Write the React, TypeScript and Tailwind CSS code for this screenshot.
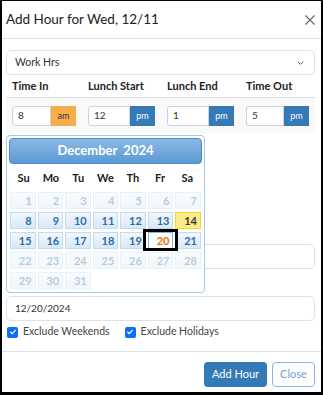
import React from 'react'

const times = [
  { label: 'Time In', value: '8', suffix: 'am' },
  { label: 'Lunch Start', value: '12', suffix: 'pm' },
  { label: 'Lunch End', value: '1', suffix: 'pm' },
  { label: 'Time Out', value: '5', suffix: 'pm' },
]

const weekDays = ['Su', 'Mo', 'Tu', 'We', 'Th', 'Fr', 'Sa']
const days = Array.from({ length: 31 }, (_, i) => i + 1)

function DayCell({ day }: { day: number }) {
  const disabled = day < 8 || day > 21
  const today = day === 14
  const selected = day === 20

  let cls = 'border-[#c5dbec] bg-linear-to-b from-[#f1f7fd] to-[#d8e8f8] text-[#2e6e9e]'
  if (today) cls = 'border-[#fad42e] bg-[#fbec88] text-[#363636]'
  if (selected) cls = 'border-[#79b7e7] bg-white text-[#e17009]'

  return (
    <div
      className={`relative h-[17px] border text-right pr-[3px] text-[11px] font-bold leading-[15px] ${cls} ${disabled ? 'opacity-35' : ''}`}
    >
      {day}
      {selected && (
        <span className="absolute -left-[6px] -right-[6px] -top-[4px] -bottom-[3px] z-10 border-[3px] border-black" />
      )}
    </div>
  )
}

function DatePicker() {
  return (
    <div className="absolute left-[4px] top-[134px] w-[199px] rounded-[4px] border border-[#a6c9e2] bg-white p-[2px] pb-[3px]">
      <div className="flex h-[26px] items-center justify-center rounded-[4px] border border-[#4f8ac2] bg-linear-to-b from-[#8cb9e4] to-[#5a9ad4] text-[13px] font-bold text-white">
        December&nbsp;&nbsp;2024
      </div>
      <div className="grid h-[28px] grid-cols-7 items-center px-[1px] text-center text-[11px] font-bold text-[#222]">
        {weekDays.map(d => (
          <span key={d}>{d}</span>
        ))}
      </div>
      <div className="grid grid-cols-7 gap-x-[2px] gap-y-[3px] px-[1px]">
        {days.map(d => (
          <DayCell key={d} day={d} />
        ))}
      </div>
    </div>
  )
}

function Check({ label }: { label: string }) {
  return (
    <label className="flex items-center gap-[5px] text-[10.5px] text-[#444]">
      <span className="flex h-[11px] w-[11px] items-center justify-center rounded-[2px] bg-[#0d6efd]">
        <svg viewBox="0 0 12 12" className="h-[8px] w-[8px]" fill="none" stroke="white" strokeWidth="2" strokeLinecap="round" strokeLinejoin="round">
          <path d="M2.5 6.2l2.3 2.3 4.7-5" />
        </svg>
      </span>
      {label}
    </label>
  )
}

export default function App() {
  return (
    <div className="relative h-[395px] w-[323px] overflow-hidden border-x-2 border-t border-b-[3px] border-black bg-white font-['Lato',sans-serif] text-[#212529]">
      {/* Header */}
      <div className="flex h-[38px] items-center justify-between border-b border-[#dee2e6] pl-[4px] pr-[6px]">
        <h2 className="text-[13.5px] text-[#222]">Add Hour for Wed, 12/11</h2>
        <svg viewBox="0 0 10 10" className="h-[10px] w-[10px]" stroke="#666" strokeWidth="1.1" fill="none">
          <path d="M0.5 0.5l9 9M9.5 0.5l-9 9" />
        </svg>
      </div>

      {/* Body */}
      <div className="h-[312px] pl-[4px] pr-[6px] pt-[11px]">
        <div className="flex h-[25px] items-center justify-between rounded-[5px] border border-[#dee2e6] pl-[8px] pr-[10px] text-[10.5px] text-[#333]">
          <span>Work Hrs</span>
          <svg viewBox="0 0 10 6" className="h-[4px] w-[7px]" fill="none" stroke="#444" strokeWidth="1.4">
            <path d="M1 1l4 4 4-4" />
          </svg>
        </div>

        <div className="grid h-[22px] grid-cols-[76px_79px_79px_75px] items-center text-[11px] font-bold text-[#222]">
          {times.map(t => (
            <span key={t.label} className="pl-[6px]">
              {t.label}
            </span>
          ))}
        </div>
        <div className="grid h-[36px] grid-cols-[76px_79px_79px_75px] items-center border-t border-[#dee2e6] bg-[#f9f9f9]">
          {times.map(t => (
            <div key={t.label} className="flex h-[20px] px-[6px]">
              <div className="flex flex-1 items-center rounded-l-[3px] border border-[#ced4da] bg-white pl-[5px] text-[10px] text-[#333]">
                {t.value}
              </div>
              <div
                className={`flex w-[25px] items-center justify-center text-[9px] ${
                  t.suffix === 'am' ? 'bg-[#f7ad4c] text-[#333]' : 'bg-[#337ab7] text-white'
                }`}
              >
                {t.suffix}
              </div>
            </div>
          ))}
        </div>

        <div className="mt-[111px] h-[25px] rounded-[5px] border border-[#dee2e6]" />
        <div className="mt-[27px] flex h-[25px] items-center rounded-[5px] border border-[#dee2e6] pl-[8px] text-[10px] text-[#333]">
          12/20/2024
        </div>
        <div className="flex h-[22px] items-center gap-[15px] pl-[1px]">
          <Check label="Exclude Weekends" />
          <Check label="Exclude Holidays" />
        </div>
      </div>

      {/* Footer */}
      <div className="flex justify-end gap-[5px] border-t border-[#dee2e6] pr-[6px] pt-[10px]">
        <button className="h-[25px] w-[63px] rounded-[4px] bg-[#337ab7] text-[11px] text-white">Add Hour</button>
        <button className="h-[25px] w-[43px] rounded-[4px] border border-[#8fb3dc] text-[11px] text-[#6f9fd1]">Close</button>
      </div>

      <DatePicker />
    </div>
  )
}
